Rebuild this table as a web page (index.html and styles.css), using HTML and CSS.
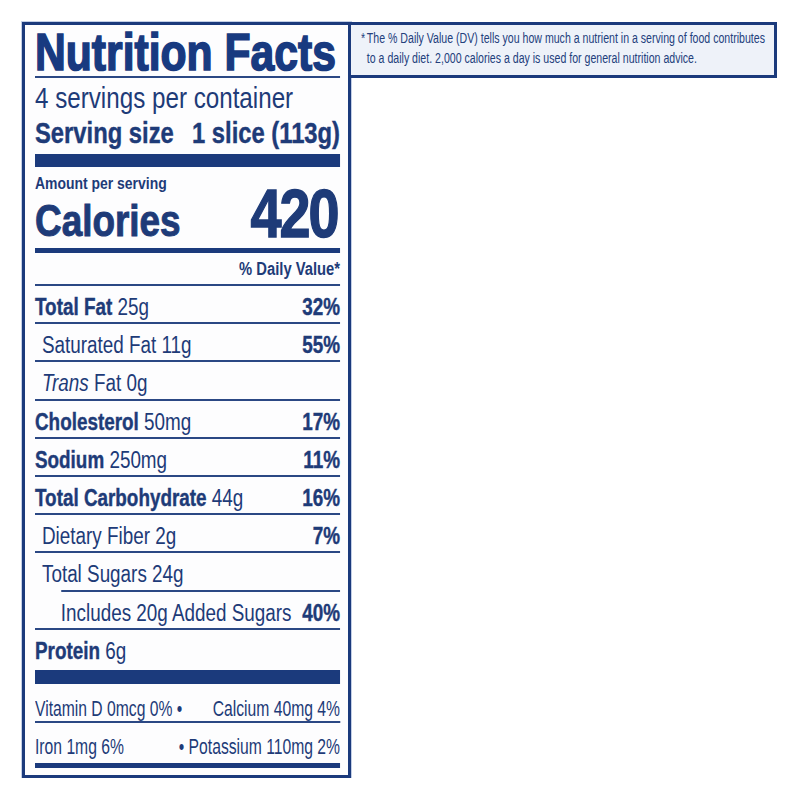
FILE: index.html
```html
<!DOCTYPE html>
<html lang="en">
<head>
<meta charset="utf-8">
<title>Nutrition Facts</title>
<link rel="stylesheet" href="styles.css">
</head>
<body>
<div class="page">
  <section class="label">
    <div class="label-inner">
      <h1 class="title">Nutrition Facts</h1>
      <p class="servings">4 servings per container</p>
      <p class="serving-size"><span>Serving size</span><span>1 slice (113g)</span></p>
      <div class="bar bar-thick"></div>
      <div class="calories">
        <div class="cal-left">
          <div class="amount">Amount per serving</div>
          <div class="cal-label">Calories</div>
        </div>
        <div class="cal-value">420</div>
      </div>
      <div class="bar bar-medium"></div>
      <div class="dv-head">% Daily Value*</div>
      <div class="row"><span><b>Total Fat</b> 25g</span><b>32%</b></div>
      <div class="row ind1"><span>Saturated Fat 11g</span><b>55%</b></div>
      <div class="row ind1"><span><i>Trans</i> Fat 0g</span></div>
      <div class="row"><span><b>Cholesterol</b> 50mg</span><b>17%</b></div>
      <div class="row"><span><b>Sodium</b> 250mg</span><b>11%</b></div>
      <div class="row"><span><b>Total Carbohydrate</b> 44g</span><b>16%</b></div>
      <div class="row ind1"><span>Dietary Fiber 2g</span><b>7%</b></div>
      <div class="row ind1 sub-rule"><span>Total Sugars 24g</span></div>
      <div class="row ind2"><span>Includes 20g Added Sugars</span><b>40%</b></div>
      <div class="row last"><span><b>Protein</b> 6g</span></div>
      <div class="bar bar-thick2"></div>
      <div class="vit-block">
        <div class="vit vit1"><span>Vitamin D 0mcg 0% •</span><span>Calcium 40mg 4%</span></div>
        <div class="vit vit2"><span>Iron 1mg 6%</span><span>• Potassium 110mg 2%</span></div>
      </div>
      <div class="bar bar-bottom"></div>
    </div>
  </section>
  <aside class="footnote">
    <div class="foot-inner">
      <span class="star">*</span>
      <p class="note">The % Daily Value (DV) tells you how much a nutrient in a serving of food contributes to a daily diet. 2,000 calories a day is used for general nutrition advice.</p>
    </div>
  </aside>
</div>
</body>
</html>
```

FILE: styles.css
```css
* { box-sizing: border-box; }
html, body { margin: 0; padding: 0; background: #ffffff; }
body {
  font-family: "Liberation Sans", Arial, sans-serif;
  color: #1e3b78;
}
.page {
  display: flex;
  align-items: flex-start;
  padding: 22px 0 0 22px;
}
.label {
  width: 329px;
  border: 3px solid #1b3a7c;
  box-shadow: 0 0 0 1px #c3cfe6;
  background: #fdfdfe;
  padding: 4px 8px 7px 10px;
}
/* condensed type: content laid out wide, then narrowed */
.label-inner {
  width: 372px;
  margin-right: -67px;
  transform: scaleX(0.82);
  transform-origin: 0 0;
}
.title {
  margin: 0;
  font-size: 52px;
  line-height: 47px;
  height: 49px;
  font-weight: 700;
  color: #183a80;
  -webkit-text-stroke: 1.6px #183a80;
  border-bottom: 2px solid #2b4884;
  white-space: nowrap;
}
.servings {
  margin: 5px 0 0;
  font-size: 29.5px;
  line-height: 30px;
}
.serving-size {
  margin: 4px 0 0;
  font-size: 29px;
  line-height: 32px;
  font-weight: 700;
  -webkit-text-stroke: 0.4px #1e3b78;
  display: flex;
  justify-content: space-between;
  white-space: nowrap;
}
.bar { background: #1b3a7c; }
.bar-thick { margin-top: 5px; height: 13px; }
.calories {
  display: flex;
  justify-content: space-between;
  align-items: flex-end;
}
.amount {
  margin-top: 8px;
  font-size: 17px;
  line-height: 18px;
  font-weight: 700;
  white-space: nowrap;
}
.cal-label {
  margin-top: 5px;
  font-size: 45px;
  line-height: 46px;
  font-weight: 700;
  -webkit-text-stroke: 1px #1e3b78;
}
.cal-value {
  font-size: 68px;
  line-height: 61px;
  font-weight: 700;
  letter-spacing: -2.4px;
  padding-right: 3px;
  -webkit-text-stroke: 1.4px #1e3b78;
}
.bar-medium { margin-top: 4px; height: 5px; }
.dv-head {
  margin-top: 6px;
  font-size: 18px;
  line-height: 20px;
  font-weight: 700;
  text-align: right;
  padding-bottom: 5px;
  border-bottom: 2px solid #2b4884;
}
.row {
  display: flex;
  justify-content: space-between;
  font-size: 23px;
  line-height: 26px;
  height: 38.2px;
  padding-top: 8px;
  border-bottom: 2px solid #2b4884;
  white-space: nowrap;
}
.row b { font-weight: 700; -webkit-text-stroke: 0.4px #1e3b78; }
.row i { font-style: italic; }
.ind1 span:first-child { padding-left: 8.5px; }
.ind2 span:first-child { padding-left: 31.5px; }
.sub-rule {
  border-bottom: none;
  background: linear-gradient(#2b4884, #2b4884) no-repeat right bottom / calc(100% - 31.5px) 2px;
}
.row.last {
  border-bottom: none;
  height: 40px;
}
.bar-thick2 { height: 14px; }
/* vitamin lines use an even narrower face */
.vit-block {
  width: 437.6px;
  margin-right: -65.6px;
  transform: scaleX(0.85);
  transform-origin: 0 0;
}
.vit {
  display: flex;
  justify-content: space-between;
  font-size: 22.5px;
  line-height: 24px;
  white-space: nowrap;
}
.vit1 {
  padding-top: 13px;
  height: 39px;
  border-bottom: 2px solid #2b4884;
}
.vit2 {
  padding-top: 12px;
  height: 40px;
}
.bar-bottom { height: 5px; }
.footnote {
  margin-left: -3px;
  width: 429px;
  height: 56px;
  border: 3px solid #1b3a7c;
  background: #eef2f9;
  padding: 3px 0 0 10px;
  font-size: 15.5px;
  line-height: 20px;
  color: #23407c;
}
.foot-inner {
  display: flex;
  width: 601px;
  transform: scaleX(0.683);
  transform-origin: 0 0;
}
.star { width: 8.5px; flex: none; }
.note { margin: 0; width: 592px; }
```
